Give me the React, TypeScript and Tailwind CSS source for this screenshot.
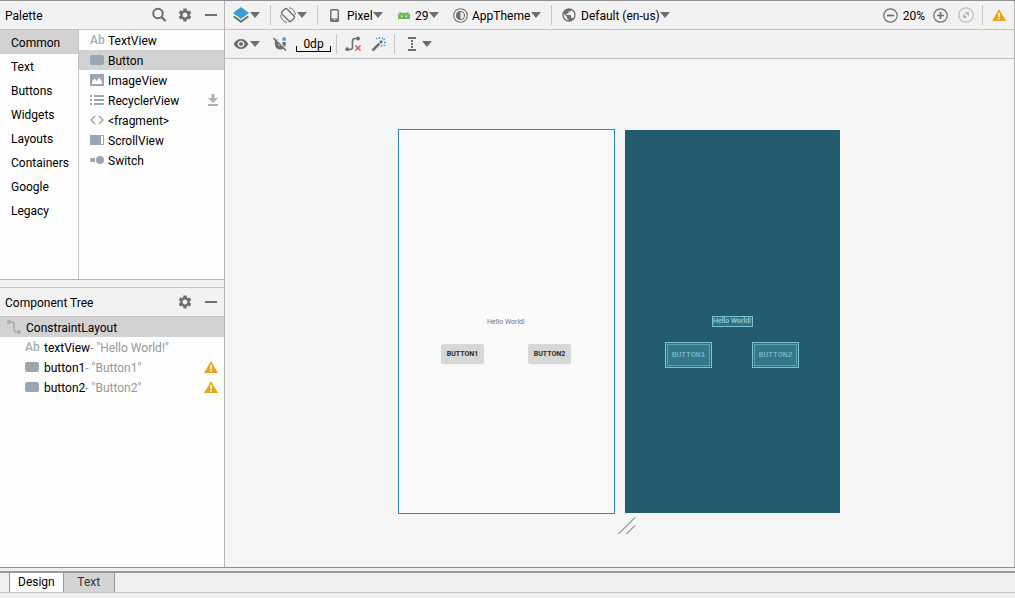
import { useState } from "react";
import type { ReactNode } from "react";
import { MdPublic, MdSettings, MdVisibility } from "react-icons/md";

const categories = [
  "Common",
  "Text",
  "Buttons",
  "Widgets",
  "Layouts",
  "Containers",
  "Google",
  "Legacy",
];

function Caret() {
  return (
    <svg viewBox="0 0 10 6" className="w-[10px] h-[6px] shrink-0 pointer-events-none" fill="#6e6e6e">
      <path d="M0 0h10L5 6z" />
    </svg>
  );
}

function Separator() {
  return <div className="w-px h-5 bg-[#c9c9c9] shrink-0" />;
}

function WarningIcon() {
  return (
    <svg viewBox="0 0 14 12" className="w-[14px] h-3 shrink-0">
      <path d="M7 0l7 12H0z" fill="#e9a51b" />
      <path d="M6.2 4h1.6v4H6.2zM6.2 9h1.6v1.6H6.2z" fill="#fff" />
    </svg>
  );
}

function TextIcon() {
  return (
    <span className="w-[14px] text-xs leading-4 font-medium text-[#a8b0b6] shrink-0">Ab</span>
  );
}

function ButtonIcon() {
  return <span className="w-[14px] h-[10px] rounded-xs bg-[#9aa7b0] shrink-0" />;
}

function ImageIcon() {
  return (
    <svg viewBox="0 0 14 12" className="w-[14px] h-3 shrink-0">
      <path d="M0 0h14v12H0z" fill="#9aa7b0" />
      <path d="M2 10V7.5l2.5-3L7 7.3l2-3.8 3 4V10z" fill="#fff" />
    </svg>
  );
}

function ListIcon() {
  return (
    <svg viewBox="0 0 14 12" className="w-[14px] h-3 shrink-0" fill="#9aa7b0">
      <path d="M0 1h2v2H0zM4 1h10v2H4zM0 5h2v2H0zM4 5h10v2H4zM0 9h2v2H0zM4 9h10v2H4z" />
    </svg>
  );
}

function FragmentIcon() {
  return (
    <svg viewBox="0 0 14 10" className="w-[14px] h-[10px] shrink-0" fill="none" stroke="#9aa7b0" strokeWidth="1.5">
      <path d="M5 1L1 5l4 4M9 1l4 4-4 4" />
    </svg>
  );
}

function ScrollIcon() {
  return (
    <svg viewBox="0 0 14 10" className="w-[14px] h-[10px] shrink-0">
      <path d="M0 0h14v10H0z" fill="#9aa7b0" />
      <path d="M11 1h2v8h-2z" fill="#fff" />
    </svg>
  );
}

function SwitchIcon() {
  return (
    <svg viewBox="0 0 14 10" className="w-[14px] h-[10px] shrink-0" fill="#9aa7b0">
      <path d="M2 3h3v4H2a2 2 0 010-4z" />
      <circle cx="10" cy="5" r="4" />
    </svg>
  );
}

function ConstraintIcon() {
  return (
    <svg viewBox="0 0 14 14" className="w-[14px] h-[14px] shrink-0">
      <path d="M2 2h2.5c2 0 2.500 1 2.500 2.500v4C7 10.500 8 12 10 12h2" fill="none" stroke="#a3adb3" strokeWidth="1.500" />
      <circle cx="2" cy="2" r="2" fill="#a3adb3" />
      <circle cx="12" cy="12" r="2" fill="#a3adb3" />
    </svg>
  );
}

const widgets: { name: string; icon: ReactNode; download?: boolean }[] = [
  { name: "TextView", icon: <TextIcon /> },
  { name: "Button", icon: <ButtonIcon /> },
  { name: "ImageView", icon: <ImageIcon /> },
  { name: "RecyclerView", icon: <ListIcon />, download: true },
  { name: "<fragment>", icon: <FragmentIcon /> },
  { name: "ScrollView", icon: <ScrollIcon /> },
  { name: "Switch", icon: <SwitchIcon /> },
];

const treeNodes = [
  { id: "textView", value: '"Hello World!"', icon: <TextIcon />, warning: false },
  { id: "button1", value: '"Button1"', icon: <ButtonIcon />, warning: true },
  { id: "button2", value: '"Button2"', icon: <ButtonIcon />, warning: true },
];

function MinimizeButton({ label }: { label: string }) {
  return (
    <button aria-label={label} className="w-4 h-4 flex items-center justify-center">
      <span className="w-3 h-[2px] bg-[#6e6e6e]" />
    </button>
  );
}

function Palette() {
  const [category, setCategory] = useState("Common");
  const [widget, setWidget] = useState("Button");

  return (
    <section className="flex flex-col">
      <header className="h-[29px] flex items-center gap-[10px] px-[5px] border-b border-[#c4c4c4]">
        <h2 className="flex-1 pt-px">Palette</h2>
        <button aria-label="Search">
          <svg viewBox="0 0 16 16" className="w-4 h-4" fill="none" stroke="#6e6e6e" strokeWidth="2">
            <circle cx="7" cy="6.500" r="4.800" />
            <path d="M10.500 10L14.500 14" strokeWidth="2.400" />
          </svg>
        </button>
        <button aria-label="Palette settings">
          <MdSettings className="w-4 h-4 text-[#6e6e6e]" />
        </button>
        <MinimizeButton label="Hide palette" />
      </header>
      <div className="h-[250px] flex bg-[#fdfdfd] border-b border-[#b4b4b4]">
        <ul className="w-[79px] border-r border-[#c4c4c4]">
          {categories.map((name) => (
            <li key={name}>
              <button
                onClick={() => setCategory(name)}
                className={`w-full h-6 flex items-center pl-[11px] pt-[2px] ${
                  category === name ? "bg-[#d2d2d2]" : ""
                }`}
              >
                {name}
              </button>
            </li>
          ))}
        </ul>
        <ul className="flex-1">
          {widgets.map((item) => (
            <li key={item.name}>
              <button
                onClick={() => setWidget(item.name)}
                className={`w-full h-5 flex items-center gap-1 pl-[11px] pr-[6px] ${
                  widget === item.name ? "bg-[#d2d2d2]" : ""
                }`}
              >
                {item.icon}
                <span className="flex-1 text-left pt-[2px]">{item.name}</span>
                {item.download && (
                  <svg viewBox="0 0 10 12" className="w-[10px] h-3" fill="#b0b0b0">
                    <path d="M3.500 0h3v4H10L5 9 0 4h3.500zM0 10h10v2H0z" />
                  </svg>
                )}
              </button>
            </li>
          ))}
        </ul>
      </div>
    </section>
  );
}

function ComponentTree() {
  return (
    <section className="flex-1 flex flex-col mt-[7px] border-t border-[#c4c4c4]">
      <header className="h-[29px] flex items-center gap-[10px] px-[5px] border-b border-[#c4c4c4]">
        <h2 className="flex-1 pt-px">Component Tree</h2>
        <button aria-label="Component tree settings">
          <MdSettings className="w-4 h-4 text-[#6e6e6e]" />
        </button>
        <MinimizeButton label="Hide component tree" />
      </header>
      <ul role="tree" aria-label="Component Tree" className="flex-1 bg-[#fdfdfd]">
        <li role="treeitem" aria-selected="true" className="h-5 flex items-center gap-[5px] pl-[7px] bg-[#d2d2d2]">
          <ConstraintIcon />
          <span className="pt-[2px]">ConstraintLayout</span>
        </li>
        {treeNodes.map((node) => (
          <li key={node.id} role="treeitem" className="h-5 flex items-center gap-[5px] pl-[25px] pr-[6px]">
            {node.icon}
            <span className="flex-1 pt-[2px]">
              {node.id}
              <span className="text-[#999]">- {node.value}</span>
            </span>
            {node.warning && <WarningIcon />}
          </li>
        ))}
      </ul>
    </section>
  );
}

function ToolSelect({ label, value }: { label: string; value: string }) {
  return (
    <span className="flex items-center">
      <select aria-label={label} className="appearance-none bg-transparent p-0 pt-px">
        <option>{value}</option>
      </select>
      <Caret />
    </span>
  );
}

function MainToolbar() {
  return (
    <div className="h-[29px] flex items-center px-2 border-b border-[#c4c4c4]">
      <button aria-label="Select design surface" className="flex items-center gap-px">
        <svg viewBox="0 0 16 16" className="w-4 h-4">
          <path d="M0 10l8 6 8-6-1.500-1.200L8 13.600 1.500 8.800z" fill="#6e6e6e" />
          <path d="M8 0l8 6-8 6-8-6z" fill="#389fd6" />
        </svg>
        <Caret />
      </button>
      <div className="ml-[10px] mr-[9px]">
        <Separator />
      </div>
      <button aria-label="Orientation" className="flex items-center gap-px">
        <svg viewBox="0 0 16 16" className="w-4 h-4" fill="none" stroke="#6e6e6e">
          <rect x="4.500" y="1.500" width="7" height="13" rx="1.200" transform="rotate(-45 8 8)" strokeWidth="1.300" />
          <path d="M7 15.300A7.300 7.300 0 01.7 8M9 .7A7.300 7.300 0 0115.300 8" />
        </svg>
        <Caret />
      </button>
      <div className="ml-[10px] mr-3">
        <Separator />
      </div>
      <div className="flex items-center gap-2">
        <svg viewBox="0 0 9 13" className="w-[9px] h-[13px]">
          <rect x="0.750" y="0.750" width="7.500" height="11.500" rx="1" fill="none" stroke="#6e6e6e" strokeWidth="1.500" />
          <path d="M1 9.500h7V12H1z" fill="#6e6e6e" />
          <path d="M3.500 10.300h2v1h-2z" fill="#f2f2f2" />
        </svg>
        <ToolSelect label="Device" value="Pixel" />
      </div>
      <div className="ml-[14px] flex items-center gap-1">
        <svg viewBox="0 0 14 8" className="w-[14px] h-2">
          <path d="M1 8V2l2 1.500L2.200.5l2.600 1.600a6 6 0 014.400 0L11.800.5 11 3.500 13 2v6z" fill="#6cb953" />
          <path d="M4 4.500h1.400v1.400H4zM8.600 4.500H10v1.400H8.600z" fill="#f2f2f2" />
        </svg>
        <ToolSelect label="API version" value="29" />
      </div>
      <div className="ml-[14px] flex items-center gap-1">
        <svg viewBox="0 0 15 15" className="w-[15px] h-[15px]">
          <circle cx="7.500" cy="7.500" r="6.800" fill="none" stroke="#6e6e6e" strokeWidth="1.100" />
          <circle cx="7.500" cy="7.500" r="4" fill="none" stroke="#6e6e6e" strokeWidth="1.100" />
          <path d="M7.500 3.500a4 4 0 000 8z" fill="#6e6e6e" />
        </svg>
        <ToolSelect label="Theme" value="AppTheme" />
      </div>
      <div className="ml-[10px] mr-[9px]">
        <Separator />
      </div>
      <div className="flex items-center gap-1">
        <MdPublic className="w-4 h-4 text-[#6e6e6e]" />
        <ToolSelect label="Locale" value="Default (en-us)" />
      </div>

      <div className="ml-auto flex items-center">
        <button aria-label="Zoom out">
          <svg viewBox="0 0 15 15" className="w-[15px] h-[15px]" fill="none" stroke="#6e6e6e">
            <circle cx="7.500" cy="7.500" r="6.700" strokeWidth="1.200" />
            <path d="M4 7.500h7" strokeWidth="1.700" />
          </svg>
        </button>
        <span className="ml-[5px] mr-2 pt-px">20%</span>
        <button aria-label="Zoom in">
          <svg viewBox="0 0 15 15" className="w-[15px] h-[15px]" fill="none" stroke="#6e6e6e">
            <circle cx="7.500" cy="7.500" r="6.700" strokeWidth="1.200" />
            <path d="M4 7.500h7M7.500 4v7" strokeWidth="1.700" />
          </svg>
        </button>
        <button aria-label="Zoom to fit" className="ml-[10px] mr-2">
          <svg viewBox="0 0 16 16" className="w-4 h-4">
            <circle cx="8" cy="8" r="7.200" fill="none" stroke="#bdbdbd" strokeWidth="1.300" />
            <path d="M6.500 5H11v4.500zM5 6.500V11h4.500z" fill="#b4b4b4" />
          </svg>
        </button>
        <Separator />
        <button aria-label="Show warnings" className="ml-[9px]">
          <WarningIcon />
        </button>
      </div>
    </div>
  );
}

function DesignToolbar() {
  return (
    <div className="h-[29px] flex items-center pl-2 border-b border-[#c4c4c4]">
      <button aria-label="View options" className="flex items-center gap-px">
        <MdVisibility className="w-4 h-4 text-[#6e6e6e]" />
        <Caret />
      </button>
      <button aria-label="Autoconnect" className="ml-3">
        <svg viewBox="0 0 16 16" className="w-4 h-4">
          <path d="M4.500 3v5a3.800 3.800 0 007.600 0V6" fill="none" stroke="#6e6e6e" strokeWidth="3.400" />
          <path d="M10.400 1.500h3.400v3.200h-3.400z" fill="#389fd6" />
          <path d="M2.500 1.500L15 14" stroke="#f2f2f2" strokeWidth="1.500" />
          <path d="M1.500 2L14 14.500" stroke="#6e6e6e" strokeWidth="1.600" />
        </svg>
      </button>
      <button
        aria-label="Default margins 0dp"
        className="relative ml-2 w-[35px] h-4 leading-4 border-b border-black"
      >
        0dp
        <span className="absolute left-0 bottom-0 w-px h-[5px] bg-black" />
        <span className="absolute right-0 bottom-0 w-px h-[5px] bg-black" />
      </button>
      <div className="ml-[5px] mr-2">
        <Separator />
      </div>
      <button aria-label="Clear constraints">
        <svg viewBox="0 0 16 16" className="w-4 h-4">
          <path d="M2.500 13.500H5c2 0 2.500-1 2.500-2.500V5c0-1.500.5-2.500 2.500-2.500h2.500" fill="none" stroke="#6e6e6e" strokeWidth="1.600" />
          <circle cx="2.200" cy="13.200" r="1.900" fill="#6e6e6e" />
          <circle cx="13" cy="2.500" r="1.900" fill="#6e6e6e" />
          <path d="M10.500 9.500l5 5M15.500 9.500l-5 5" stroke="#e05555" strokeWidth="1.500" />
        </svg>
      </button>
      <button aria-label="Infer constraints" className="ml-[10px]">
        <svg viewBox="0 0 16 16" className="w-4 h-4">
          <path d="M1.500 14.500L8.300 7.700M9 7l2-2" stroke="#6e6e6e" strokeWidth="2.600" />
          <path
            d="M5 2.500h1.500M8.500 1v2M11.500 1.500v1.500M13.800 2.800l-1.300 1.300M13 6.500h2M12.500 9l1.500 1M10.500 9v2"
            stroke="#389fd6"
            strokeWidth="1.300"
          />
        </svg>
      </button>
      <div className="ml-[7px] mr-3">
        <Separator />
      </div>
      <button aria-label="Guidelines" className="flex items-center gap-[5px]">
        <svg viewBox="0 0 10 14" className="w-[10px] h-[14px]" fill="none" stroke="#6e6e6e" strokeWidth="2">
          <path d="M1 1h8M1 13h8" />
          <path d="M5 3v8" strokeDasharray="2 1" />
        </svg>
        <Caret />
      </button>
    </div>
  );
}

function Canvas() {
  return (
    <main className="flex-1 bg-[#f5f5f5] pt-[70px] pr-[2px] flex justify-center">
      <div>
        <div className="flex items-start gap-[10px]">
          <div className="w-[217px] h-[385px] pt-[186px] flex flex-col items-center border border-[#2b86cc] bg-[#fafafa] font-[Roboto,sans-serif]">
            <span className="h-3 text-[7px] leading-3 text-[#757575]">Hello World!</span>
            <div className="mt-4 flex gap-11">
              <button className="w-[43px] h-5 rounded-xs bg-[#d6d7d7] shadow-xs text-[7px] leading-5 font-bold text-[#2b2b2b]">
                BUTTON1
              </button>
              <button className="w-[43px] h-5 rounded-xs bg-[#d6d7d7] shadow-xs text-[7px] leading-5 font-bold text-[#2b2b2b]">
                BUTTON2
              </button>
            </div>
          </div>
          <div className="w-[215px] h-[383px] mt-px pt-[186px] flex flex-col items-center bg-[#225c6e]">
            <span className="w-[41px] h-[11px] flex items-center justify-center border border-[#7cc0d2] bg-[#2f7183] text-[7px] font-medium text-[#93d2e2] whitespace-nowrap">
              Hello World!
            </span>
            <div className="mt-[15px] flex gap-10 font-['Liberation_Mono',monospace]">
              <button className="w-[47px] h-[26px] p-px border border-[#7cc0d2] bg-[#2f7183]">
                <span className="h-full flex items-center justify-center border border-[#5aa0b3] bg-[#347789] text-[8px] text-[#86c6d7]">
                  BUTTON1
                </span>
              </button>
              <button className="w-[47px] h-[26px] p-px border border-[#7cc0d2] bg-[#2f7183]">
                <span className="h-full flex items-center justify-center border border-[#5aa0b3] bg-[#347789] text-[8px] text-[#86c6d7]">
                  BUTTON2
                </span>
              </button>
            </div>
          </div>
        </div>
        {/* resize handle */}
        <svg viewBox="0 0 18 18" className="w-[18px] h-[18px] mt-[3px] ml-[220px]" stroke="#5a5a5a" fill="none">
          <path d="M0.500 17L17 .5M8.500 17L17 8.500" />
        </svg>
      </div>
    </main>
  );
}

function EditorTabs() {
  const [tab, setTab] = useState("Design");

  return (
    <footer className="border-t border-[#8f8f8f] pt-[3px] pb-[5px] bg-[#f0f0f0]">
      <div role="tablist" className="h-[22px] flex items-stretch pl-[9px] border-t-2 border-b border-t-[#999] border-b-[#c4c4c4]">
        {["Design", "Text"].map((name) => (
          <button
            key={name}
            role="tab"
            aria-selected={tab === name}
            onClick={() => setTab(name)}
            className={`px-2 pb-[2px] first:border-l border-r border-[#999] min-w-[51px] ${
              tab === name ? "bg-white text-black" : "bg-[#d4d4d4] text-[#333]"
            }`}
          >
            {name}
          </button>
        ))}
      </div>
    </footer>
  );
}

export default function App() {
  return (
    <div className="min-h-screen flex flex-col bg-[#f2f2f2] text-black text-xs font-[Roboto,sans-serif] border-t border-[#8f8f8f]">
      <div className="flex-1 flex">
        <aside className="w-[225px] shrink-0 flex flex-col border-r border-[#b4b4b4]">
          <Palette />
          <ComponentTree />
        </aside>
        <div className="flex-1 min-w-0 flex flex-col border-r border-[#b4b4b4]">
          <MainToolbar />
          <DesignToolbar />
          <Canvas />
        </div>
      </div>
      <EditorTabs />
    </div>
  );
}
